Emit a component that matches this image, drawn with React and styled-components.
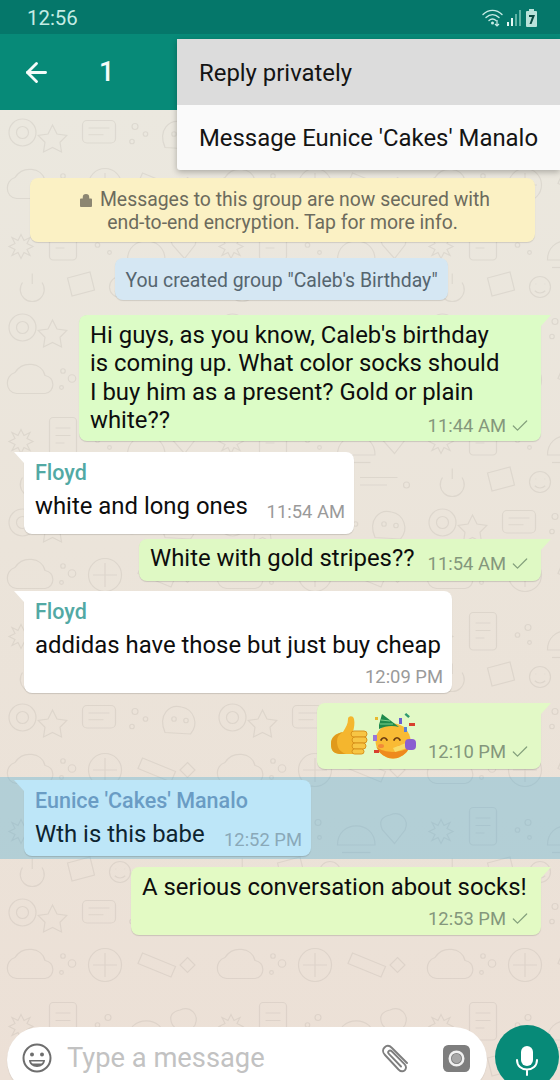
import React from "react";
import styled, { createGlobalStyle } from "styled-components";
import { ArrowLeft, Check } from "lucide-react";

const doodles = `<svg xmlns="http://www.w3.org/2000/svg" width="280" height="260" viewBox="0 0 280 260" fill="none" stroke="#8a8478" stroke-opacity=".14" stroke-width="1.6">
<circle cx="30" cy="30" r="18"/><circle cx="30" cy="30" r="8"/><path d="M70 20l6 12 13 2-9 9 2 13-12-6-12 6 2-13-9-9 13-2z"/>
<rect x="110" y="14" width="44" height="30" rx="6"/><path d="M118 24h28M118 33h20"/><circle cx="180" cy="22" r="4"/><circle cx="194" cy="32" r="3"/><circle cx="176" cy="42" r="3"/>
<path d="M220 50c-10-24 6-38 22-34 16 3 24 22 12 36z"/><circle cx="232" cy="32" r="3"/><circle cx="248" cy="34" r="3"/>
<path d="M20 90c10-16 36-14 40 4 14 2 14 22 0 24H22c-16-2-16-24-2-28z"/><circle cx="84" cy="88" r="3"/><circle cx="96" cy="98" r="5"/><circle cx="82" cy="110" r="2.5"/>
<circle cx="140" cy="100" r="22"/><path d="M140 84v32M124 100h32"/><path d="M190 84l44 18-6 14-44-18z"/><path d="M250 90l10 10-10 10-10-10z"/>
<path d="M16 170l8 4 4-8 4 8 8-4-4 8 8 4-8 4 4 8-8-4-4 8-4-8-8 4 4-8-8-4 8-4z"/><rect x="66" y="150" width="36" height="50" rx="5"/><path d="M74 164h20M74 174h20M74 184h12"/>
<circle cx="130" cy="180" r="3"/><circle cx="144" cy="170" r="4"/><circle cx="146" cy="190" r="2.5"/><path d="M170 200c0-34 50-34 50 0z"/><path d="M176 210h38"/><path d="M240 160c14-6 26 6 20 20l-14 18-16-18c-6-12 0-18 10-20z"/>
<path d="M30 230a16 16 0 1 0 26 0"/><path d="M43 218v14"/><path d="M90 224l30-8 6 24-30 8z"/><circle cx="160" cy="236" r="14"/><path d="M154 232h1M166 232h1M153 241c4 4 10 4 14 0"/><path d="M200 230h50M200 240h36"/><circle cx="262" cy="240" r="4"/>
</svg>`;

const GlobalStyle = createGlobalStyle`
  html, body {
    margin: 0;
    padding: 0;
    background: #fff;
  }
  * {
    box-sizing: border-box;
  }
  body {
    font-family: Roboto, "Noto Sans", sans-serif;
  }
`;

const Phone = styled.div`
  position: relative;
  width: 560px;
  height: 1080px;
  display: flex;
  flex-direction: column;
  overflow: hidden;
`;

const StatusBar = styled.div`
  height: 34px;
  flex: none;
  background: #05776a;
  display: flex;
  align-items: center;
  justify-content: space-between;
  padding: 2px 21px 0 27px;
  color: #c4ece4;
  font-size: 20.4px;
`;

const AppBar = styled.div`
  height: 76px;
  flex: none;
  background: #078a78;
  display: flex;
  align-items: center;
  padding-left: 21px;
  color: #f4fbf9;
`;

const Count = styled.span`
  margin-left: 47px;
  font-size: 27px;
  font-weight: 500;
`;

const Menu = styled.div`
  position: absolute;
  top: 39px;
  right: 0;
  width: 383px;
  background: #fafafa;
  border-radius: 3px 0 0 3px;
  box-shadow: 0 2px 6px rgba(0, 0, 0, 0.28);
  z-index: 3;
`;

const MenuItem = styled.div`
  height: 65.5px;
  padding: 2px 0 0 22px;
  display: flex;
  align-items: center;
  font-size: 23.9px;
  color: #141414;
  background: ${(p) => (p.$active ? "#dcdcdc" : "transparent")};
`;

const Main = styled.div`
  flex: 1;
  min-height: 0;
  display: flex;
  flex-direction: column;
  justify-content: space-between;
  overflow: hidden;
  background-color: #ece5dc;
  background-image: url("data:image/svg+xml,${encodeURIComponent(doodles)}"),
    linear-gradient(#ebe8df, #ebe4da 45%, #ece0d6);
  background-size: 210px 195px, auto;
`;

const Chat = styled.div`
  display: flex;
  flex-direction: column;
  padding-top: 68px;
`;

const Notice = styled.div`
  align-self: flex-start;
  margin: ${(p) => p.$margin};
  width: ${(p) => p.$width}px;
  padding: ${(p) => p.$padding};
  background: ${(p) => p.$bg};
  color: ${(p) => p.$color};
  border-radius: 8px;
  box-shadow: 0 1px 1px rgba(0, 0, 0, 0.12);
  font-size: 19.4px;
  line-height: 23px;
  text-align: center;
`;

const LockIcon = styled.svg`
  width: 12px;
  height: 14px;
  margin: 0 8px 0 5px;
  vertical-align: -1px;
`;

const Row = styled.div`
  display: flex;
  justify-content: ${(p) => (p.$out ? "flex-end" : "flex-start")};
  margin-top: ${(p) => p.$top}px;
  padding: ${(p) => (p.$out ? "0 19px 0 0" : "0 0 0 24px")};
  ${(p) => p.$selected && "background: rgba(70, 170, 210, 0.34); padding-top: 3px; padding-bottom: 3px;"}
`;

const Bubble = styled.div`
  position: relative;
  width: ${(p) => p.$width}px;
  height: ${(p) => p.$height}px;
  padding: ${(p) => p.$padding || "6px 14px 0 11px"};
  background: ${(p) => p.$bg};
  border-radius: ${(p) => (p.$out ? "8px 0 8px 8px" : "0 8px 8px 8px")};
  box-shadow: 0 1px 1px rgba(0, 0, 0, 0.14);
  &::after {
    content: "";
    position: absolute;
    top: 0;
    ${(p) => (p.$out ? "right: -10px;" : "left: -10px;")}
    border-top: 11px solid ${(p) => p.$bg};
    ${(p) =>
      p.$out
        ? "border-right: 10px solid transparent;"
        : "border-left: 10px solid transparent;"}
  }
`;

const Sender = styled.div`
  font-size: 21.5px;
  line-height: 26px;
  font-weight: 500;
  color: ${(p) => p.$color};
`;

const MessageText = styled.div`
  font-size: 23.9px;
  line-height: 28.3px;
  margin-top: ${(p) => p.$top || 0}px;
  color: ${(p) => p.$color || "#0d0d0d"};
  white-space: nowrap;
`;

const Foot = styled.div`
  display: flex;
  justify-content: space-between;
  align-items: flex-end;
  margin-top: ${(p) => p.$top || 0}px;
`;

const Meta = styled.div`
  display: flex;
  align-items: center;
  gap: 4px;
  margin: 0 ${(p) => (p.$sent ? "-3px" : "0")} -3px auto;
  font-size: 18.4px;
  line-height: 22px;
  color: ${(p) => p.$color || "#84977c"};
  white-space: nowrap;
`;

const EmojiRow = styled.div`
  display: flex;
  align-items: center;
  gap: 5px;
  margin-bottom: 1px;
`;

const InputBar = styled.div`
  height: 53px;
  flex: none;
  display: flex;
  align-items: flex-start;
  padding-left: 7px;
  gap: 8px;
`;

const InputPill = styled.div`
  width: 480px;
  height: 66px;
  flex: none;
  background: #fff;
  border-radius: 33px;
  display: flex;
  align-items: flex-start;
  padding: 15px 17px 0 14px;
  box-shadow: 0 1px 1px rgba(0, 0, 0, 0.1);
`;

const Placeholder = styled.div`
  flex: 1;
  margin-left: 14px;
  font-size: 27.3px;
  line-height: 32px;
  color: #c2c2c2;
`;

const ClipWrap = styled.div`
  margin: 2px 32px 0 0;
  width: 30px;
  height: 30px;
  flex: none;
`;

const CameraWrap = styled.div`
  margin-top: 3px;
  width: 27px;
  height: 27px;
  flex: none;
`;

const MicButton = styled.div`
  width: 64px;
  height: 64px;
  margin-top: -2px;
  flex: none;
  border-radius: 50%;
  background: #078a78;
  display: flex;
  justify-content: center;
  padding-top: 21px;
`;

function SentMeta({ time }) {
  return (
    <Meta $sent>
      {time}
      <Check size={20} strokeWidth={1.5} color="#84a07c" />
    </Meta>
  );
}

function StatusIcons() {
  return (
    <svg width="58" height="20" viewBox="0 0 56 20" fill="none">
      <g stroke="#c9ede6" strokeWidth="1.4" strokeLinecap="round">
        <path d="M1 6.5C6.5 1 14.5 1 20 6.5" />
        <path d="M4 9.5c4-3.6 9-3.6 13 0" />
        <path d="M7 12.5c2.300-2 4.700-2 7 0" />
      </g>
      <circle cx="10.500" cy="15" r="1.500" fill="#c9ede6" />
      <path d="M15 12v6M13 16l2 2 2-2" stroke="#c9ede6" strokeWidth="1.200" />
      <g fill="#5fb3a4">
        <rect x="25" y="14" width="2" height="4" fill="#e6f7f3" />
        <rect x="29" y="10" width="2" height="8" fill="#e6f7f3" />
        <rect x="33" y="6" width="2" height="12" />
        <rect x="37" y="2" width="2" height="16" />
      </g>
      <rect x="44" y="3" width="11" height="16" rx="1" fill="#b9e2da" />
      <rect x="47" y="1" width="5" height="3" fill="#b9e2da" />
      <path d="M47 7h6l-3.500 9h-2l2.500-7h-3z" fill="#0a4a42" />
    </svg>
  );
}

function ThumbsUp() {
  return (
    <svg width="38" height="42" viewBox="0 0 38 42">
      <path d="M13 17c3-5 5-8 5-13 0-3 5-4 6 0 1 4 0 9-1 13h10v22H12C5 39 1 37 1 29c0-7 4-10 12-12z" fill="#f4b62e" />
      <path d="M1 29c0 8 4 10 11 10h4c-6-2-9-6-9-13 0-4 2-7 6-9-8 2-12 5-12 12z" fill="#e09a1c" />
      <g fill="#f7c544" stroke="#d8921c" strokeWidth="1">
        <rect x="21" y="16" width="16" height="6" rx="3" />
        <rect x="22" y="22" width="15" height="6" rx="3" />
        <rect x="22" y="28" width="14" height="6" rx="3" />
        <rect x="22" y="34" width="12" height="5" rx="2.500" />
      </g>
    </svg>
  );
}

function PartyFace() {
  return (
    <svg width="44" height="46" viewBox="0 0 44 46">
      <circle cx="20" cy="28" r="17.500" fill="#f9bb35" />
      <path d="M20 45.500A17.500 17.500 0 0 1 3.500 34c7 6 24 7 33 0A17.500 17.500 0 0 1 20 45.500z" fill="#ee8a1e" />
      <path d="M6 12L9 1l17 13c-7-2-14-1-20 2z" fill="#1f8a4c" />
      <path d="M8 7l9 1M7 11l13 0" stroke="#7fd08a" strokeWidth="1.200" />
      <path d="M8 27c1.500-3 4.500-3 6 0M21 27c1.500-3 4.500-3 6 0" stroke="#6b3a10" strokeWidth="1.700" fill="none" strokeLinecap="round" />
      <ellipse cx="8" cy="33" rx="3" ry="2" fill="#ee7a3a" opacity=".75" />
      <ellipse cx="28" cy="34" rx="3" ry="2" fill="#ee7a3a" opacity=".75" />
      <path d="M20 35l13-5 1 5-12 4z" fill="#f7dc6a" />
      <rect x="32" y="26" width="11" height="11" rx="4" fill="#8a5fd0" />
      <rect x="0" y="22" width="4" height="6" fill="#9a78d8" />
      <rect x="1" y="37" width="5" height="3" fill="#d8402f" />
      <rect x="2" y="4" width="3" height="3" fill="#e7b82f" />
      <rect x="26" y="5" width="3" height="6" fill="#6a5fd0" />
      <rect x="36" y="10" width="6" height="3" fill="#d8402f" />
      <rect x="32" y="1" width="5" height="2.500" fill="#2f9a70" transform="rotate(40 34 2)" />
      <rect x="31" y="14" width="3" height="5" fill="#5a80d8" />
    </svg>
  );
}

export default function App() {
  return (
    <Phone>
      <GlobalStyle />
      <StatusBar>
        <span>12:56</span>
        <StatusIcons />
      </StatusBar>
      <AppBar>
        <ArrowLeft size={31} strokeWidth={2.2} />
        <Count>1</Count>
      </AppBar>
      <Menu>
        <MenuItem $active>Reply privately</MenuItem>
        <MenuItem>Message Eunice 'Cakes' Manalo</MenuItem>
      </Menu>
      <Main>
        <Chat>
          <Notice $margin="0 0 0 30px" $width={505} $padding="10px 0 8px" $bg="#fbf1c4" $color="#6c6b5d">
            <LockIcon viewBox="0 0 13 15">
              <path d="M3 6V4.500a3.500 3.500 0 0 1 7 0V6h2a1 1 0 0 1 1 1v7a1 1 0 0 1-1 1H1a1 1 0 0 1-1-1V7a1 1 0 0 1 1-1z" fill="#8c8672" />
            </LockIcon>
            Messages to this group are now secured with
            <br />
            end-to-end encryption. Tap for more info.
          </Notice>
          <Notice $margin="16px 0 0 115px" $width={333} $padding="11px 0 8px" $bg="#d5e7f3" $color="#55656f">
            You created group "Caleb's Birthday"
          </Notice>

          <Row $out $top={15}>
            <Bubble $out $bg="#dcfcc6" $width={462} $height={126}>
              <MessageText>
                Hi guys, as you know, Caleb's birthday
                <br />
                is coming up. What color socks should
                <br />I buy him as a present? Gold or plain
              </MessageText>
              <Foot>
                <MessageText>white??</MessageText>
                <SentMeta time="11:44 AM" />
              </Foot>
            </Bubble>
          </Row>

          <Row $top={11}>
            <Bubble $bg="#ffffff" $width={330} $height={82} $padding="8px 9px 0 11px">
              <Sender $color="#52a9a4">Floyd</Sender>
              <Foot $top={6}>
                <MessageText>white and long ones</MessageText>
                <Meta $color="#9a9a9a">11:54 AM</Meta>
              </Foot>
            </Bubble>
          </Row>

          <Row $out $top={5}>
            <Bubble $out $bg="#dff9c4" $width={402} $height={42} $padding="5px 14px 0 11px">
              <Foot>
                <MessageText>White with gold stripes??</MessageText>
                <SentMeta time="11:54 AM" />
              </Foot>
            </Bubble>
          </Row>

          <Row $top={10}>
            <Bubble $bg="#ffffff" $width={428} $height={102} $padding="8px 9px 0 11px">
              <Sender $color="#52a9a4">Floyd</Sender>
              <MessageText $top={6}>addidas have those but just buy cheap</MessageText>
              <Foot $top={7}>
                <Meta $color="#9a9a9a">12:09 PM</Meta>
              </Foot>
            </Bubble>
          </Row>

          <Row $out $top={10}>
            <Bubble $out $bg="#e2f9c6" $width={224} $height={66} $padding="10px 14px 0 13px">
              <Foot>
                <EmojiRow>
                  <ThumbsUp />
                  <PartyFace />
                </EmojiRow>
                <SentMeta time="12:10 PM" />
              </Foot>
            </Bubble>
          </Row>

          <Row $top={8} $selected>
            <Bubble $bg="#bde6f8" $width={287} $height={76} $padding="8px 9px 0 11px">
              <Sender $color="#6a9cc4">Eunice 'Cakes' Manalo</Sender>
              <Foot $top={6}>
                <MessageText $color="#0d2430">Wth is this babe</MessageText>
                <Meta $color="#8aa9b8">12:52 PM</Meta>
              </Foot>
            </Bubble>
          </Row>

          <Row $out $top={8}>
            <Bubble $out $bg="#e3fac4" $width={410} $height={68}>
              <MessageText>A serious conversation about socks!</MessageText>
              <Foot $top={7}>
                <SentMeta time="12:53 PM" />
              </Foot>
            </Bubble>
          </Row>
        </Chat>

        <InputBar>
          <InputPill>
            <svg width="32" height="32" viewBox="0 0 32 32" fill="none">
              <circle cx="16" cy="16" r="13.500" stroke="#6e6e6e" strokeWidth="2" />
              <circle cx="11" cy="12.500" r="2" fill="#6e6e6e" />
              <circle cx="21" cy="12.500" r="2" fill="#6e6e6e" />
              <path d="M8 18h16c0 4-3.500 7-8 7s-8-3-8-7z" fill="#6e6e6e" />
              <path d="M10 19.500h12c-.5 1.500-1.500 2-2 2h-8c-.5 0-1.500-.5-2-2z" fill="#fff" />
            </svg>
            <Placeholder>Type a message</Placeholder>
            <ClipWrap>
              <svg width="30" height="30" viewBox="0 0 30 30" fill="none" stroke="#7e7e7e" strokeWidth="1.900" strokeLinecap="round">
                <path d="M26 19L11 4C8.500 1.500 5.500 1.500 3.500 3.500S1.500 8.500 4 11l13.500 14.500c2 2 4.500 2.300 6.300.7 1.800-1.700 1.500-4.200-.3-6L11 7.500c-1.200-1.200-2.500-1.200-3.300-.4-.8.8-.7 2 .4 3.100L20 22.500" />
              </svg>
            </ClipWrap>
            <CameraWrap>
              <svg width="27" height="27" viewBox="0 0 26 26">
                <rect width="26" height="26" rx="5" fill="#7e7e7e" />
                <circle cx="13" cy="13" r="6.500" fill="none" stroke="#f1f1f1" strokeWidth="2.400" />
                <circle cx="13" cy="13" r="4.500" fill="#a8a8a8" />
              </svg>
            </CameraWrap>
          </InputPill>
          <MicButton>
            <svg width="22" height="30" viewBox="0 0 22 30" fill="none">
              <rect x="5" y="0" width="12" height="20" rx="6" fill="#fff" />
              <path d="M1 14c0 6 4.500 9.500 10 9.500S21 20 21 14M11 23.500V29" stroke="#fff" strokeWidth="2" strokeLinecap="round" />
            </svg>
          </MicButton>
        </InputBar>
      </Main>
    </Phone>
  );
}
